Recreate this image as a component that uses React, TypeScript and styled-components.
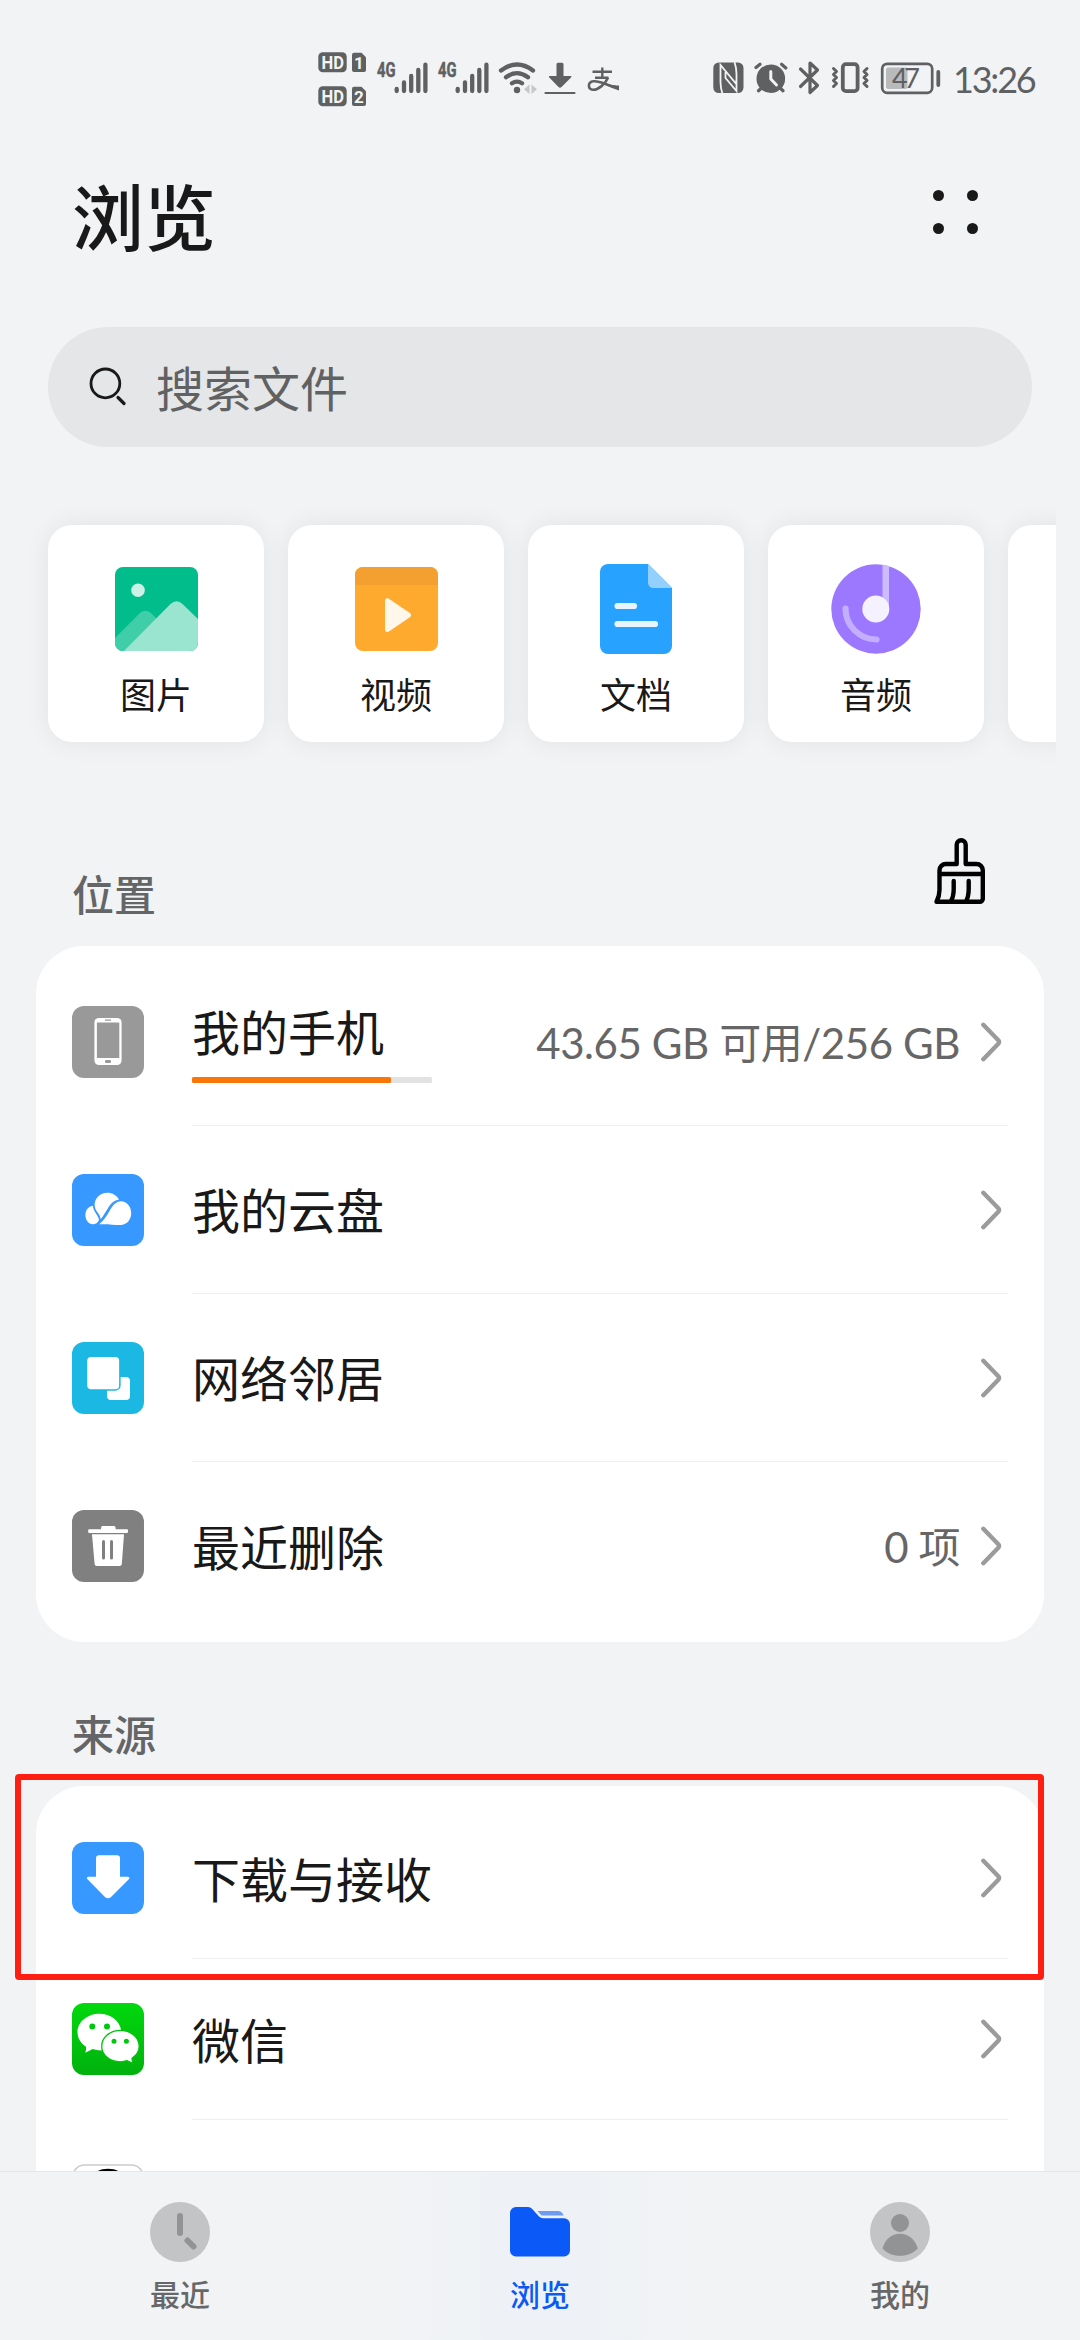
import React from "react";
import styled, { createGlobalStyle } from "styled-components";

const CJK = `"Noto Sans CJK SC", sans-serif`;
const INK = "#5f6062";
const BG = "#f1f3f5";

const GlobalStyle = createGlobalStyle`
  * { box-sizing: border-box; }
  body { margin: 0; background: ${BG}; font-family: ${CJK}; color: #191919; }
  svg { display: block; flex: none; }
`;

const Screen = styled.div`
  width: 1080px;
  height: 2340px;
  display: flex;
  flex-direction: column;
  overflow: hidden;
  background: ${BG};
`;

const Content = styled.main`
  flex: 1;
  min-height: 0;
  overflow: hidden;
`;

/* Status bar */

const StatusBar = styled.header`
  height: 157px;
  padding-left: 318px;
  display: flex;
  align-items: center;
`;

const StatusGroup = styled.div<{ $start?: number }>`
  display: flex;
  align-items: center;
  gap: 6px;
  margin-left: ${(p) => p.$start ?? 0}px;
`;

const Clock = styled.span`
  font: 400 36px/40px Lato, sans-serif;
  letter-spacing: -2.2px;
  color: ${INK};
  padding-left: 4px;
`;

/* Title and search */

const TitleRow = styled.div`
  height: 121px;
  padding: 0 102px 0 72px;
  display: flex;
  align-items: center;
  justify-content: space-between;
`;

const Title = styled.h1`
  margin: 0;
  font-size: 72px;
  font-weight: 500;
  line-height: 80px;
  padding-bottom: 8px;
`;

const MenuDots = styled.div`
  display: grid;
  grid-template-columns: 11px 11px;
  gap: 22px 23.5px;
  margin-bottom: 11px;
`;

const Dot = styled.i`
  width: 11px;
  height: 11px;
  border-radius: 50%;
  background: #191919;
`;

const Search = styled.div`
  height: 120px;
  margin: 49px 48px 0;
  padding: 0 40px;
  border-radius: 60px;
  background: #e5e6e8;
  display: flex;
  align-items: center;
  gap: 28px;
  font-size: 48px;
  line-height: 60px;
  color: #606162;
`;

const SearchText = styled.span`
  padding-bottom: 3px;
`;

/* Category strip */

const Strip = styled.div`
  margin: 46px 24px 0;
  padding: 32px 24px;
  display: flex;
  gap: 24px;
  overflow: hidden;
`;

const Category = styled.div`
  flex: none;
  width: 216px;
  height: 217px;
  border-radius: 24px;
  background: #fff;
  box-shadow: 0 0 26px rgba(0, 0, 0, 0.07);
  display: flex;
  flex-direction: column;
  align-items: center;
  padding-top: 36px;
  font-size: 36px;
  line-height: 44px;
`;

const CategoryArt = styled.div`
  height: 96px;
  display: flex;
  align-items: center;
  margin-bottom: 14px;
`;

/* Lists */

const SectionHead = styled.div<{ $height: number }>`
  height: ${(p) => p.$height}px;
  padding: 0 94px 21px 72px;
  display: flex;
  align-items: flex-end;
  justify-content: space-between;
`;

const SectionTitle = styled.h2`
  margin: 0;
  font-size: 42px;
  font-weight: 500;
  line-height: 60px;
  padding-bottom: 2px;
  color: #646566;
`;

const BrushSlot = styled.div`
  padding-bottom: 21px;
`;

const Card = styled.section`
  position: relative;
  margin: 0 36px;
  padding: 12px 36px;
  border-radius: 48px;
  background: #fff;
`;

const Row = styled.div<{ $height: number }>`
  height: ${(p) => p.$height}px;
  display: flex;
  align-items: center;
  gap: 48px;
`;

const IconSlot = styled.div<{ $nudge: number }>`
  padding-bottom: ${(p) => p.$nudge}px;
`;

const RowBody = styled.div`
  flex: 1;
  align-self: stretch;
  display: flex;
  align-items: center;
  border-bottom: 1px solid #eeeeef;
  ${Row}:last-of-type & {
    border-bottom: 0;
  }
`;

const Labels = styled.div`
  flex: 1;
`;

const Label = styled.div<{ $lift: number }>`
  font-size: 48px;
  line-height: 60px;
  padding-bottom: ${(p) => p.$lift}px;
`;

const Meter = styled.div`
  width: 240px;
  height: 6px;
  border-radius: 1.5px;
  background: #e2e2e2;
`;

const MeterFill = styled.div`
  height: 6px;
  border-radius: 1.5px;
  background: #fb7609;
`;

const Detail = styled.span`
  font-family: Lato, "Noto Sans CJK SC", sans-serif;
  font-size: 42px;
  line-height: 60px;
  letter-spacing: -0.42px;
  color: #666;
  padding-top: 2px;
  margin-right: 21px;
  white-space: nowrap;
`;

const ChevronSlot = styled.div`
  padding-right: 6px;
`;

const Highlight = styled.div`
  position: absolute;
  left: -21.5px;
  top: -12px;
  width: 1029px;
  height: 206px;
  border: 6px solid #ff1f12;
  border-radius: 4px;
`;

/* Bottom navigation */

const Nav = styled.nav`
  height: 169px;
  display: flex;
  border-top: 1px solid #e6e7e9;
  background: linear-gradient(90deg, #f2f3f5 36%, #eef2f6 46%, #eef2f6 54%, #f2f3f5 64%);
`;

const Tab = styled.div<{ $active?: boolean }>`
  flex: 1;
  display: flex;
  flex-direction: column;
  align-items: center;
  padding-top: 30px;
  font-size: 30px;
  font-weight: 500;
  line-height: 40px;
  color: ${(p) => (p.$active ? "#0b59f7" : "#666768")};
`;

const TabIcon = styled.div`
  height: 60px;
  display: flex;
  align-items: center;
  margin-bottom: 11px;
`;

/* Status icons share one vertical band, 60 to 97 */

const StatusIcon = ({ x, w, children }: { x: number; w: number; children: React.ReactNode }) => (
  <svg width={w} height={37} viewBox={`${x} 60 ${w} 37`} fill="none" stroke={INK} strokeLinecap="round" strokeLinejoin="round">
    {children}
  </svg>
);

const HdBadges = () => (
  <svg width="50" height="56" viewBox="318 50.5 50 56">
    {[0, 34].map((dy, i) => (
      <g key={dy} transform={`translate(0 ${dy})`}>
        <rect x="318.3" y="51.7" width="28.4" height="20" rx="4.5" fill={INK} />
        <text x="321.5" y="68" fontFamily="Roboto, sans-serif" fontWeight="700" fontSize="18" textLength="22.5" lengthAdjust="spacingAndGlyphs" fill={BG}>HD</text>
        <path d="M354 52.3h7.500l4.500 4.500v12.700a2 2 0 0 1-2 2h-10a2 2 0 0 1-2-2v-15.200a2 2 0 0 1 2-2z" fill={INK} />
        <text x="359" y="68" textAnchor="middle" fontFamily="Roboto, sans-serif" fontWeight="700" fontSize="17" fill={BG}>{i + 1}</text>
      </g>
    ))}
  </svg>
);

const Signal = ({ w }: { w: number }) => (
  <StatusIcon x={430 - w} w={w}>
    <text x="377" y="76.500" fontFamily="Roboto, sans-serif" fontWeight="700" fontSize="19.500" textLength="18.500" lengthAdjust="spacingAndGlyphs" fill={INK} strokeWidth=".5">4G</text>
    <path d="M396.700 89V91M404 82.500V91M411.200 76V91M418.300 70V91M425.400 64.700V91" strokeWidth="4.300" />
  </StatusIcon>
);

const Chevron = () => (
  <svg width="21" height="40" viewBox="0 0 21 40" fill="none" stroke="#9b9b9b" strokeWidth="4.400" strokeLinecap="round" strokeLinejoin="round">
    <path d="M2.300 2.800L17.300 18.200Q18.800 20 17.300 21.800L2.300 37.200" />
  </svg>
);

const Tile = ({ color, children }: { color: string; children: React.ReactNode }) => (
  <svg width="72" height="72" viewBox="0 0 72 72">
    <rect width="72" height="72" rx="12" fill={color} />
    {children}
  </svg>
);

const Picture = () => (
  <svg width="83" height="84" viewBox="0 0 83 84">
    <clipPath id="pic"><rect width="83" height="84" rx="8" /></clipPath>
    <g clipPath="url(#pic)">
      <rect width="83" height="84" fill="#00bd8b" />
      <path d="M-2 73L25 46Q30.500 41.500 36 46L50 60L20 90H-2Z" fill="#40cea8" />
      <path d="M9 84L55.500 37Q61.500 31.500 67.500 37L84 53V84Z" fill="#99e5d0" />
      <circle cx="23" cy="23.300" r="6.800" fill="#ccf2e8" />
    </g>
  </svg>
);

const Video = () => (
  <svg width="83" height="84" viewBox="0 0 83 84">
    <rect width="83" height="84" rx="8" fill="#fdaa2e" />
    <path d="M0 18V8A8 8 0 0 1 8 0H75A8 8 0 0 1 83 8V18Z" fill="#f4a030" />
    <path d="M32.500 33.700V62.500L53.500 48.100Z" fill="#fff7ea" stroke="#fff7ea" strokeWidth="5" strokeLinejoin="round" />
  </svg>
);

const Doc = () => (
  <svg width="72" height="90" viewBox="0 0 72 90">
    <path d="M8 0H48L72 24V82A8 8 0 0 1 64 90H8A8 8 0 0 1 0 82V8A8 8 0 0 1 8 0Z" fill="#27a2ff" />
    <path d="M48 0L72 24H53.500A5.500 5.500 0 0 1 48 18.500Z" fill="#93d0ff" />
    <path d="M17.500 42H34M17.500 60H55" stroke="#e6f5ff" strokeWidth="6.200" strokeLinecap="round" />
  </svg>
);

const Audio = () => (
  <svg width="90" height="90" viewBox="0 0 90 90">
    <circle cx="45" cy="45" r="44.700" fill="#9b78ff" />
    <path d="M51.500 .800Q55 1 58 2.200V45H51.500Z" fill="#cdbbff" />
    <path d="M14.500 44.500A31 31 0 0 0 45.500 75.500" fill="none" stroke="#c3aeff" strokeWidth="6.200" strokeLinecap="round" />
    <circle cx="44.800" cy="45" r="13.500" fill="#f5f1ff" />
  </svg>
);

const Brush = () => (
  <svg width="52" height="66" viewBox="-.5 0 52 66" fill="none" stroke="#000" strokeWidth="4.400" strokeLinejoin="round" strokeLinecap="round">
    <path d="M22.200 26V6.700a4.500 4.500 0 0 1 9 0V26H42a6.300 6.300 0 0 1 6.300 6.300V60.800a3 3 0 0 1-3 3H2C4 60 5 57 5 52V32.300A6.300 6.300 0 0 1 11.300 26ZM5 36H48M19.200 43V51Q19.200 59 16 63.800M34.200 43V51Q34.200 59 31.200 63.800" />
  </svg>
);

const PhoneTile = () => (
  <Tile color="#999">
    <rect x="22.400" y="12" width="27.200" height="47" rx="4.500" fill="#fff" />
    <path d="M24.900 16.500H47.300V52H24.900ZM33 13.600H39V14.800H33Z" fill="#999" />
    <rect x="33" y="54" width="6" height="3" rx="1.200" fill="#999" />
  </Tile>
);

const CloudTile = () => (
  <Tile color="#3798ff">
    <g fill="#fff">
      <path d="M20.800 31.800C21.500 38 26.500 41.500 27 46C26 49 23 50.400 20 50.200C16 49.500 13.400 45.500 13.400 41.200C13.400 36 16.500 32.500 20.800 31.800Z" />
      <path d="M22.600 31C22.600 24 28.500 18.800 35 18.800C40.500 18.800 45 21.500 47 25.800C42 26.500 39.500 29 37 32.500C34 37 31.500 42 28.700 45.200C28.200 39.500 22.600 37 22.600 31Z" />
      <path d="M27.200 50.300C32 46.500 34.500 42 37.500 37C40.500 31.500 44 27.200 49 27.200C54.700 27.200 59.200 32.500 59.200 39C59.200 46 54.500 51 48.500 51C42 51 36 49.900 27.200 50.300Z" />
    </g>
  </Tile>
);

const NetworkTile = () => (
  <Tile color="#1ab8e3">
    <rect x="35" y="35" width="23" height="23" rx="4" fill="#fff" />
    <rect x="14.500" y="14.300" width="33.400" height="33.600" rx="4.500" fill="#fff" stroke="#1ab8e3" strokeWidth="1.500" />
  </Tile>
);

const TrashTile = () => (
  <Tile color="#808080">
    <path d="M30.500 16H42Q43.700 16 43.700 19.300H55Q56 19.300 56 20.500V22Q56 23 55 23H17.200Q16.200 23 16.200 22V20.500Q16.200 19.300 17.200 19.300H29Q29 16 30.500 16Z" fill="#fff" />
    <path d="M20 24.200H52L49.800 54Q49.600 56 47.600 56H24.800Q22.800 56 22.600 54Z" fill="#fff" />
    <path d="M31.500 31.500V48M39.500 31.500V48" stroke="#808080" strokeWidth="3" strokeLinecap="round" />
  </Tile>
);

const DownloadTile = () => (
  <Tile color="#3798ff">
    <path d="M27 13.300H45Q48 13.300 48 16.300V34.800H56Q58.400 35.500 56.800 37.300L38.800 55.200Q36 57.500 33.200 55.200L15.500 37.300Q14 35.500 16.200 34.800H24V16.300Q24 13.300 27 13.300Z" fill="#fff" />
  </Tile>
);

const WeChatTile = () => (
  <Tile color="url(#wechat)">
    <linearGradient id="wechat" x2="0" y2="1"><stop stopColor="#00d90d" /><stop offset="1" stopColor="#00b10d" /></linearGradient>
    <path d="M27.500 10.800C15.300 10.800 5.500 19 5.500 29.300C5.500 35 8.700 40.200 13.800 43.600Q14.600 46.500 13.200 49.700L20.800 46Q24 47.400 29 47.500H38L49.300 28C48 18 38.500 10.800 27.500 10.800Z" fill="#fff" />
    <path d="M48.400 27.400C37.900 27.400 29.700 34.300 29.700 43.200C29.700 52 37.900 58.800 48.400 58.800Q52 58.800 55 57.600L60.800 60.300L60 55.200C64.500 52.200 67.200 48 67.200 43.200C67.200 34.300 58.900 27.400 48.400 27.400Z" fill="#fff" stroke="#00c30d" strokeWidth="1.300" />
    <g fill="#00c80d">
      <circle cx="20.300" cy="23.400" r="3" /><circle cx="35" cy="23.400" r="3" />
      <circle cx="42" cy="38.200" r="2.500" /><circle cx="54.400" cy="38.200" r="2.500" />
    </g>
  </Tile>
);

const PenguinTile = () => (
  <svg width="72" height="72" viewBox="0 0 72 72">
    <rect x="1" y="1" width="70" height="70" rx="11.500" fill="#fff" stroke="#cbcbcb" strokeWidth="1.500" />
    <path d="M36 4.800C49 4.800 56 13 56 25C56 45 50 66 36 66S16 45 16 25C16 13 23 4.800 36 4.800Z" fill="#000" />
  </svg>
);

const categories = [
  { label: "图片", art: <Picture /> },
  { label: "视频", art: <Video /> },
  { label: "文档", art: <Doc /> },
  { label: "音频", art: <Audio /> },
  { label: "", art: null },
];

type Item = { icon: React.ReactNode; label?: string; detail?: string; used?: number };

const places: Item[] = [
  { icon: <PhoneTile />, label: "我的手机", detail: "43.65 GB 可用/256 GB", used: (256 - 43.65) / 256 },
  { icon: <CloudTile />, label: "我的云盘" },
  { icon: <NetworkTile />, label: "网络邻居" },
  { icon: <TrashTile />, label: "最近删除", detail: "0 项" },
];

const sources: Item[] = [
  { icon: <DownloadTile />, label: "下载与接收" },
  { icon: <WeChatTile />, label: "微信" },
  { icon: <PenguinTile /> },
];

const ListRow = ({ item, height }: { item: Item; height: number }) => (
  <Row $height={height}>
    <IconSlot $nudge={height % 2}>{item.icon}</IconSlot>
    <RowBody>
      <Labels>
        <Label $lift={item.used ? 17 : 3}>{item.label}</Label>
        {item.used && (
          <Meter>
            <MeterFill style={{ width: `${item.used * 100}%` }} />
          </Meter>
        )}
      </Labels>
      {item.detail && <Detail>{item.detail}</Detail>}
      <ChevronSlot>
        <Chevron />
      </ChevronSlot>
    </RowBody>
  </Row>
);

export default function App() {
  return (
    <Screen>
      <GlobalStyle />
      <Content>
        <StatusBar>
          <StatusGroup>
            <HdBadges />
            <Signal w={56} />
            <Signal w={55} />
            <StatusIcon x={496} w={41}>
              <path d="M500 70.500Q516 58.500 532 70.500M505 77.300Q516 69 527 77.300M511 83.300Q516 80 521 83.300" strokeWidth="4.300" />
              <circle cx="516" cy="90" r="3.200" fill={INK} stroke="none" />
              <path d="M528.500 84.500V94L523 89.300ZM530.500 84.500V94L536 89.300Z" fill="#c6c7c9" stroke="none" />
            </StatusIcon>
            <StatusIcon x={543} w={35}>
              <path d="M557 62.700H561Q562.500 62.700 562.500 64.200V76H570Q571 76.500 570 77.500L560.500 87Q559 88.300 557.500 87L548.300 77.500Q547.300 76.500 548.300 76H555.500V64.200Q555.500 62.700 557 62.700Z" fill={INK} stroke="none" />
              <path d="M544.500 93H573.500" strokeWidth="2.200" />
            </StatusIcon>
            <StatusIcon x={584} w={36}>
              <path d="M591.500 71.700H611M601.300 67.500V78M594 77.700H607.500" strokeWidth="2.400" strokeLinecap="butt" />
              <path d="M607 77.700C604 84.500 597 90 592 89.700C586.500 89.300 586.500 82 592.500 81.300C600 80.500 607 86.500 618 87.800" strokeWidth="2.600" strokeLinecap="butt" />
              <path d="M605 83.500Q611 86 618 85.500V90.500Q611 88.500 604 84.500Z" fill={INK} stroke="none" />
            </StatusIcon>
          </StatusGroup>
          <StatusGroup $start={90}>
            <StatusIcon x={710} w={35}>
              <rect x="712.300" y="62.500" width="30.200" height="30.500" rx="5.500" fill={INK} stroke="none" />
              <path d="M721.500 94Q719.500 88 719.500 82V65L735.300 84V80M733.500 62Q735.500 68 735.500 74V91L724.500 78V72" stroke={BG} strokeWidth="1.800" strokeLinecap="butt" strokeLinejoin="miter" />
            </StatusIcon>
            <StatusIcon x={751} w={37}>
              <circle cx="769.800" cy="78.700" r="14.300" fill={INK} stroke="none" />
              <path d="M755 67.500L759 64.300M780.600 64.300L784.800 68M757.500 90.700L761 87.500M782 90.700L778.500 87.500" strokeWidth="3.200" />
              <path d="M769.800 71.500V79L775.500 85" stroke={BG} strokeWidth="3" />
            </StatusIcon>
            <StatusIcon x={794} w={28}>
              <path d="M799.500 69L816.500 85.500L809 92.500V63L816.500 70L799.500 86.500" strokeWidth="3.200" />
            </StatusIcon>
            <StatusIcon x={828} w={42}>
              <rect x="841.800" y="64.200" width="14.800" height="27" rx="3.200" strokeWidth="3.800" />
              <path d="M832.500 68.500L835.500 71.500L832.500 74.500L835.500 77.500L832.500 80.500L835.500 83.500L832.500 86.500M866 68.500L863 71.500L866 74.500L863 77.500L866 80.500L863 83.500L866 86.500" strokeWidth="3" />
            </StatusIcon>
            <StatusIcon x={876} w={66}>
              <rect x="885" y="67.500" width="21.500" height="21.500" rx="2.500" fill="#b9babc" stroke="none" />
              <rect x="881.200" y="63.800" width="50" height="29" rx="5" strokeWidth="2.700" />
              <path d="M937.300 72V85" strokeWidth="3.800" />
              <text x="891" y="87.500" fontFamily="Lato, sans-serif" fontSize="27" textLength="28" fill={INK} stroke="none">47</text>
            </StatusIcon>
            <Clock>13:26</Clock>
          </StatusGroup>
        </StatusBar>

        <TitleRow>
          <Title>浏览</Title>
          <MenuDots>
            <Dot /><Dot /><Dot /><Dot />
          </MenuDots>
        </TitleRow>

        <Search>
          <svg width="40" height="40" viewBox="0 0 40 40" fill="none" stroke="#191919" strokeWidth="2.800" strokeLinecap="round">
            <circle cx="17.400" cy="16.400" r="14.400" />
            <path d="M30 30.500L36 36.500" strokeWidth="3.200" />
          </svg>
          <SearchText>搜索文件</SearchText>
        </Search>

        <Strip>
          {categories.map((c, i) => (
            <Category key={i}>
              <CategoryArt>{c.art}</CategoryArt>
              {c.label}
            </Category>
          ))}
        </Strip>

        <SectionHead $height={172}>
          <SectionTitle>位置</SectionTitle>
          <BrushSlot><Brush /></BrushSlot>
        </SectionHead>
        <Card>
          {places.map((item, i) => (
            <ListRow key={i} item={item} height={168} />
          ))}
        </Card>

        <SectionHead $height={144}>
          <SectionTitle>来源</SectionTitle>
        </SectionHead>
        <Card>
          {sources.map((item, i) => (
            <ListRow key={i} item={item} height={161} />
          ))}
          <Highlight />
        </Card>
      </Content>

      <Nav>
        <Tab>
          <TabIcon>
            <svg width="60" height="60" viewBox="0 0 60 60">
              <circle cx="30" cy="30" r="30" fill="#c3c4c6" />
              <path d="M30 14V31M37.500 38.500L43.500 44.500" stroke="#929395" strokeWidth="6" strokeLinecap="round" />
            </svg>
          </TabIcon>
          最近
        </Tab>
        <Tab $active>
          <TabIcon>
            <svg width="60" height="50" viewBox="0 0 60 50">
              <path d="M6 0H18Q20.500 0 22 1.800L29 9.500Q30.800 11.300 33 11.300H54A6 6 0 0 1 60 17.300V43.500A6 6 0 0 1 54 49.500H6A6 6 0 0 1 0 43.500V6A6 6 0 0 1 6 0Z" fill="#0b59f7" />
              <path d="M27.500 4H48.500Q52.500 4.500 53.500 8.500H31.500Z" fill="#6d9af4" />
            </svg>
          </TabIcon>
          浏览
        </Tab>
        <Tab>
          <TabIcon>
            <svg width="60" height="60" viewBox="0 0 60 60">
              <circle cx="30" cy="30" r="30" fill="#c3c4c6" />
              <circle cx="30" cy="21" r="9" fill="#929395" />
              <path d="M12.500 46.500C15 37.500 21.500 31.800 30 31.800S45 37.500 47.800 46.500C43 51.500 37 53.800 30 53.800S17 51.500 12.500 46.500Z" fill="#929395" />
            </svg>
          </TabIcon>
          我的
        </Tab>
      </Nav>
    </Screen>
  );
}
